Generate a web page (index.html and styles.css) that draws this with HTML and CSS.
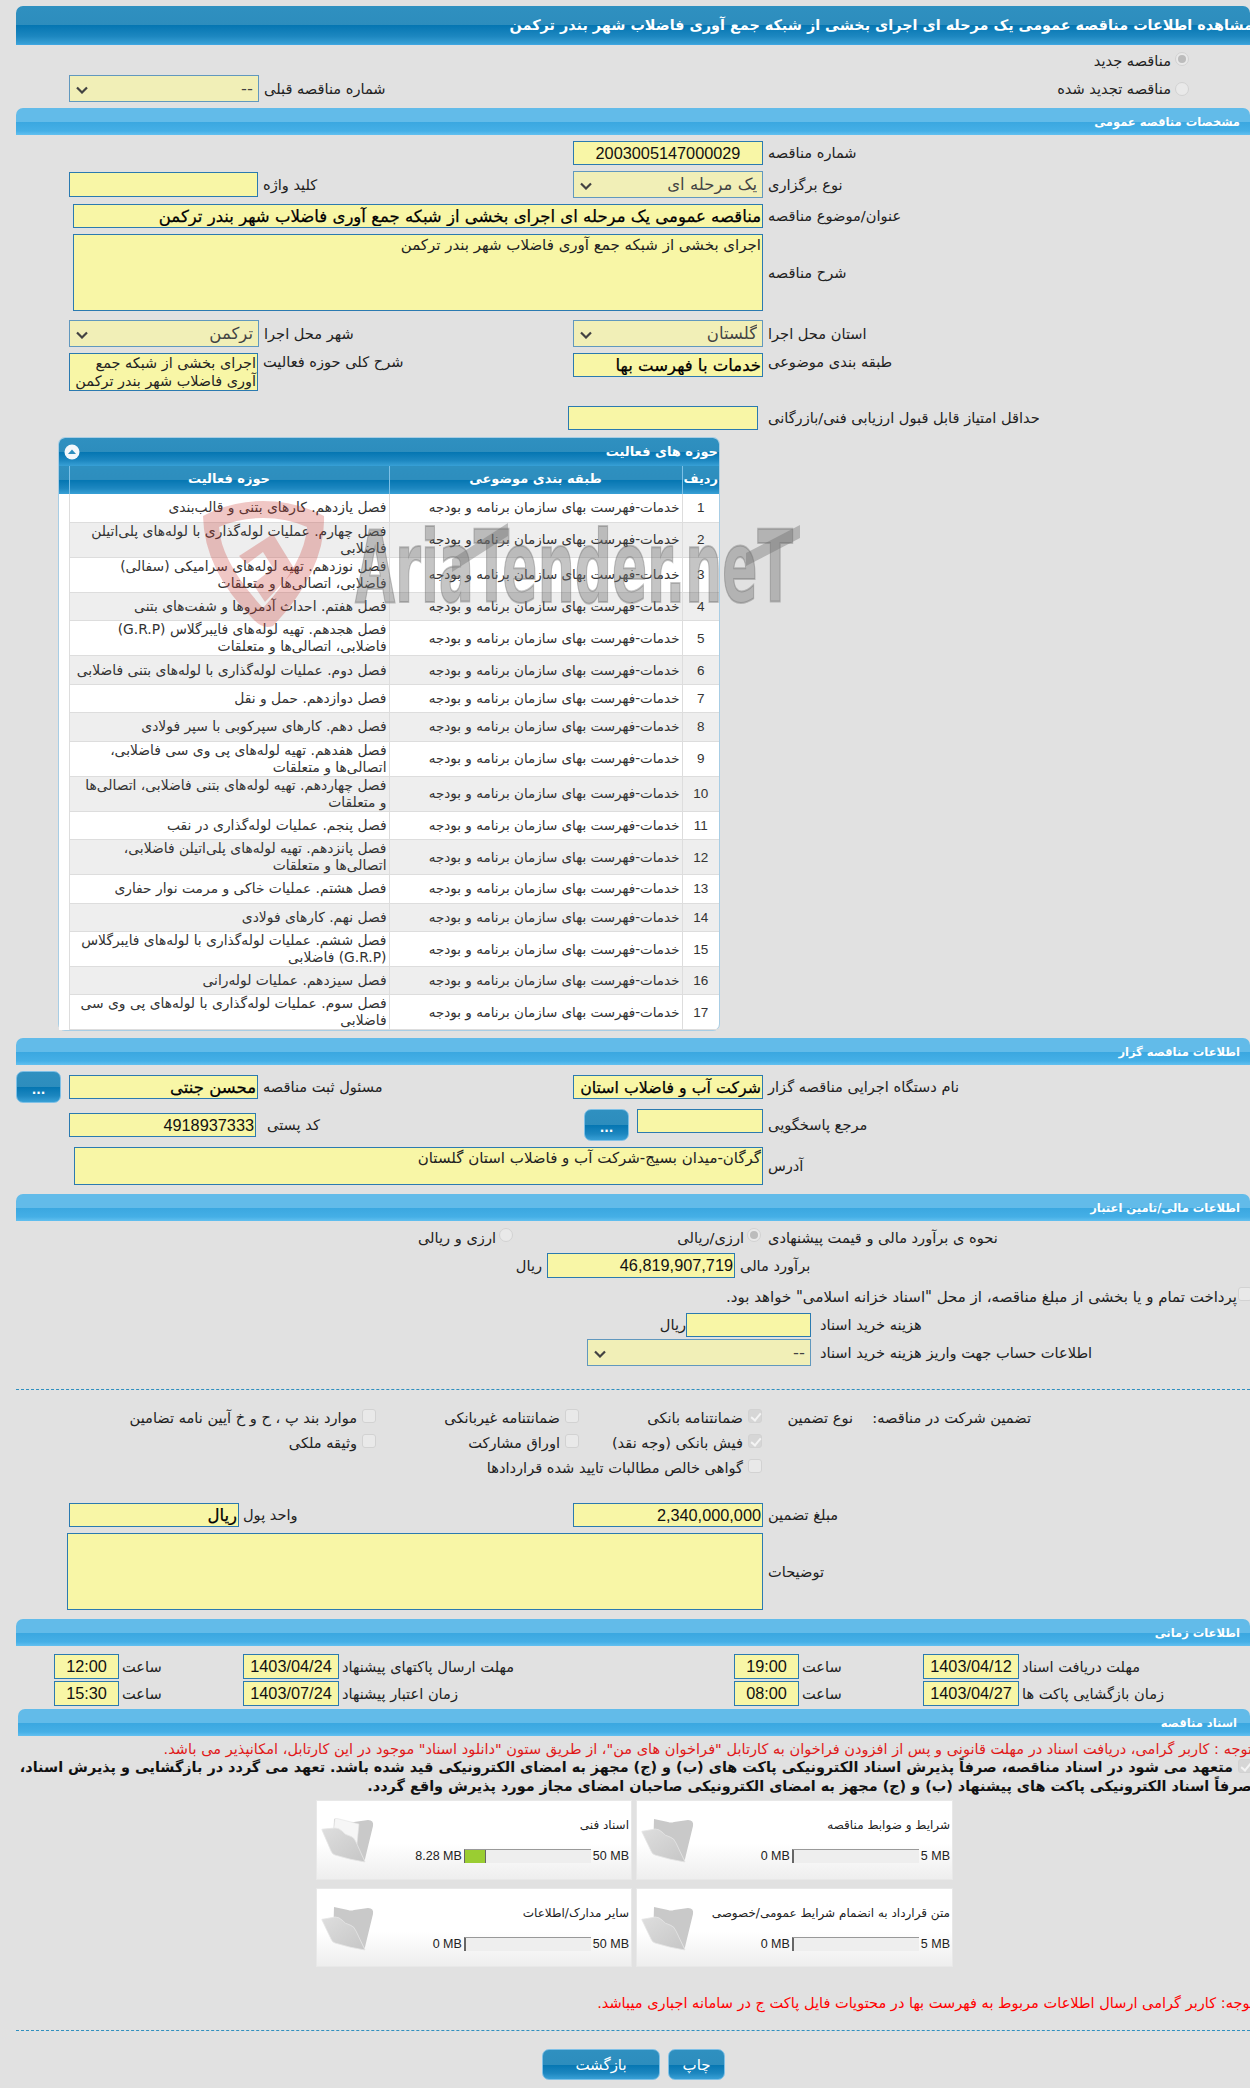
FILE: index.html
```html
<!DOCTYPE html>
<html lang="fa" dir="rtl">
<head>
<meta charset="utf-8">
<title>مشاهده اطلاعات مناقصه</title>
<link rel="stylesheet" href="styles.css">
</head>
<body>
<svg class="defs" width="0" height="0" aria-hidden="true">
  <defs>
    <linearGradient id="fgFront" x1="0" y1="0" x2="1" y2="1"><stop offset="0" stop-color="#dedede"/><stop offset="1" stop-color="#c6c6c6"/></linearGradient>
    <symbol id="folder" viewBox="0 0 53 45">
      <path d="M13 1 L27 4 Q30 5 33 4 L47 2 Q53 2 52 8 L44 41 Q43 44 40 43 L12 35 Z" fill="#c9c9c9"/>
      <path d="M1 14 Q0 13 3 13 L14 11 Q18 11 21 14 Q24 18 29 19 Q33 20 35 25 L44 44 Q30 42 14 37 Q11 36 10 33 Z" fill="url(#fgFront)" stroke="#e6e6e6" stroke-width=".8"/>
    </symbol>
    <symbol id="folderPaper" viewBox="0 0 53 45">
      <path d="M13 1 L27 4 Q30 5 33 4 L47 2 Q53 2 52 8 L44 41 Q43 44 40 43 L12 35 Z" fill="#c9c9c9"/>
      <path d="M14 0 L38 6 L36 26 L12 18 Z" fill="#f6f6f6" stroke="#e2e2e2" stroke-width=".6"/>
      <path d="M1 12 Q0 11 3 11 L14 10 Q18 10 21 13 Q24 17 29 18 Q33 19 35 24 L44 44 Q30 42 14 37 Q11 36 10 33 Z" fill="url(#fgFront)" stroke="#e6e6e6" stroke-width=".8"/>
    </symbol>
  </defs>
</svg>
<main class="page">
  <h1 class="title">مشاهده اطلاعات مناقصه عمومی یک مرحله ای اجرای بخشی از شبکه جمع آوری فاضلاب شهر بندر ترکمن</h1>

  <div class="radio-line mt-7"><input type="radio" class="radio" name="kind" checked disabled><span class="lbl">مناقصه جدید</span></div>
  <div class="row mt-9">
    <div class="col-l"><select class="field sel w-190" disabled><option>--</option></select><span class="lbl">شماره مناقصه قبلی</span></div>
    <div class="radio-line second"><input type="radio" class="radio" name="kind" disabled><span class="lbl">مناقصه تجدید شده</span></div>
  </div>

  <h2 class="bar mt-6">مشخصات مناقصه عمومی</h2>
  <div class="row mt-6">
    <div class="col-l"></div>
    <div class="col-r"><input class="field num center w-190" value="2003005147000029"><span class="lbl">شماره مناقصه</span></div>
  </div>
  <div class="row mt-6">
    <div class="col-l"><input class="field h-25 w-189"><span class="lbl">کلید واژه</span></div>
    <div class="col-r"><select class="field sel w-190" disabled><option>یک مرحله ای</option></select><span class="lbl">نوع برگزاری</span></div>
  </div>
  <div class="row-wide mt-6"><input class="field strong w-690" value="مناقصه عمومی یک مرحله ای اجرای بخشی از شبکه جمع آوری فاضلاب شهر بندر ترکمن"><span class="lbl">عنوان/موضوع مناقصه</span></div>
  <div class="row-wide mt-6"><textarea class="field area w-690 h-77">اجرای بخشی از شبکه جمع آوری فاضلاب شهر بندر ترکمن</textarea><span class="lbl">شرح مناقصه</span></div>
  <div class="row mt-9">
    <div class="col-l"><select class="field sel w-190" disabled><option>ترکمن</option></select><span class="lbl">شهر محل اجرا</span></div>
    <div class="col-r"><select class="field sel w-190" disabled><option>گلستان</option></select><span class="lbl">استان محل اجرا</span></div>
  </div>
  <div class="row mt-6 top">
    <div class="col-l"><textarea class="field area tight w-189 h-38">اجرای بخشی از شبکه جمع آوری فاضلاب شهر بندر ترکمن</textarea><span class="lbl lift">شرح کلی حوزه فعالیت</span></div>
    <div class="col-r"><input class="field strong w-190" value="خدمات با فهرست بها"><span class="lbl lift">طبقه بندی موضوعی</span></div>
  </div>
  <div class="row-min mt-15"><input class="field w-190"><span class="lbl">حداقل امتیاز قابل قبول ارزیابی فنی/بازرگانی</span></div>

  <section class="grid-box mt-7">
    <header class="grid-title">
      <span>حوزه های فعالیت</span>
      <svg class="collapse" viewBox="0 0 16 16" width="16" height="16" aria-hidden="true"><circle cx="8" cy="8" r="7.5" fill="#f4f8fb"/><path d="M4 10 L8 5.5 L12 10 Z" fill="#2f8fbf"/></svg>
    </header>
    <table class="grid">
      <colgroup><col class="c-id"><col class="c-cat"><col class="c-act"><col class="c-pad"></colgroup>
      <thead><tr><th>ردیف</th><th>طبقه بندی موضوعی</th><th>حوزه فعالیت</th><th></th></tr></thead>
      <tbody>
        <tr><td>1</td><td>خدمات-فهرست بهای سازمان برنامه و بودجه</td><td>فصل یازدهم. کارهای بتنی و قالب‌بندی</td><td></td></tr>
        <tr><td>2</td><td>خدمات-فهرست بهای سازمان برنامه و بودجه</td><td>فصل چهارم. عملیات لوله‌گذاری با لوله‌های پلی‌اتیلن<br>فاضلابی</td><td></td></tr>
        <tr><td>3</td><td>خدمات-فهرست بهای سازمان برنامه و بودجه</td><td>فصل نوزدهم. تهیه لوله‌های سرامیکی (سفالی)<br>فاضلابی، اتصالی‌ها و متعلقات</td><td></td></tr>
        <tr><td>4</td><td>خدمات-فهرست بهای سازمان برنامه و بودجه</td><td>فصل هفتم. احداث آدمروها و شفت‌های بتنی</td><td></td></tr>
        <tr><td>5</td><td>خدمات-فهرست بهای سازمان برنامه و بودجه</td><td>فصل هجدهم. تهیه لوله‌های فایبرگلاس (G.R.P)<br>فاضلابی، اتصالی‌ها و متعلقات</td><td></td></tr>
        <tr><td>6</td><td>خدمات-فهرست بهای سازمان برنامه و بودجه</td><td>فصل دوم. عملیات لوله‌گذاری با لوله‌های بتنی فاضلابی</td><td></td></tr>
        <tr><td>7</td><td>خدمات-فهرست بهای سازمان برنامه و بودجه</td><td>فصل دوازدهم. حمل و نقل</td><td></td></tr>
        <tr><td>8</td><td>خدمات-فهرست بهای سازمان برنامه و بودجه</td><td>فصل دهم. کارهای سپرکوبی با سپر فولادی</td><td></td></tr>
        <tr><td>9</td><td>خدمات-فهرست بهای سازمان برنامه و بودجه</td><td>فصل هفدهم. تهیه لوله‌های پی وی سی فاضلابی،<br>اتصالی‌ها و متعلقات</td><td></td></tr>
        <tr><td>10</td><td>خدمات-فهرست بهای سازمان برنامه و بودجه</td><td>فصل چهاردهم. تهیه لوله‌های بتنی فاضلابی، اتصالی‌ها<br>و متعلقات</td><td></td></tr>
        <tr><td>11</td><td>خدمات-فهرست بهای سازمان برنامه و بودجه</td><td>فصل پنجم. عملیات لوله‌گذاری در نقب</td><td></td></tr>
        <tr><td>12</td><td>خدمات-فهرست بهای سازمان برنامه و بودجه</td><td>فصل پانزدهم. تهیه لوله‌های پلی‌اتیلن فاضلابی،<br>اتصالی‌ها و متعلقات</td><td></td></tr>
        <tr><td>13</td><td>خدمات-فهرست بهای سازمان برنامه و بودجه</td><td>فصل هشتم. عملیات خاکی و مرمت نوار حفاری</td><td></td></tr>
        <tr><td>14</td><td>خدمات-فهرست بهای سازمان برنامه و بودجه</td><td>فصل نهم. کارهای فولادی</td><td></td></tr>
        <tr><td>15</td><td>خدمات-فهرست بهای سازمان برنامه و بودجه</td><td>فصل ششم. عملیات لوله‌گذاری با لوله‌های فایبرگلاس<br>(G.R.P) فاضلابی</td><td></td></tr>
        <tr><td>16</td><td>خدمات-فهرست بهای سازمان برنامه و بودجه</td><td>فصل سیزدهم. عملیات لوله‌رانی</td><td></td></tr>
        <tr><td>17</td><td>خدمات-فهرست بهای سازمان برنامه و بودجه</td><td>فصل سوم. عملیات لوله‌گذاری با لوله‌های پی وی سی<br>فاضلابی</td><td></td></tr>
      </tbody>
    </table>
    <div class="watermark" aria-hidden="true">
      <svg class="wm-shield" viewBox="0 0 125 128" width="125" height="128"><path d="M62 1 Q95 1 123 16 Q125 70 72 126 Q62 130 52 119 Q3 70 2 16 Q30 1 62 1 Z M62 18 Q38 18 18 27 Q20 62 62 108 Q104 62 106 27 Q86 18 62 18 Z" fill="#c8362e" fill-rule="evenodd" opacity=".28"/><path d="M38 56 L72 34 L94 70 L64 102 L52 84 L72 68 L62 52 L46 64 Z" fill="#c8362e" opacity=".28"/></svg>
      <span class="wm-text">AriaTender.neT</span>
      <svg class="wm-bars" viewBox="0 0 360 48" width="360" height="48"><path d="M0 36 L56 0 L56 13 L0 49 Z" fill="#6e6e6e" opacity=".4"/><path d="M294 30 L348 2 L348 15 L294 43 Z" fill="#6e6e6e" opacity=".4"/></svg>
    </div>
  </section>

  <h2 class="bar mt-7">اطلاعات مناقصه گزار</h2>
  <div class="row mt-6">
    <div class="col-l flush"><button class="btn dots">...</button><input class="field strong w-189" value="محسن جنتی"><span class="lbl">مسئول ثبت مناقصه</span></div>
    <div class="col-r"><input class="field strong snug w-190" value="شرکت آب و فاضلاب استان"><span class="lbl">نام دستگاه اجرایی مناقصه گزار</span></div>
  </div>
  <div class="row mt-6">
    <div class="col-l"><input class="field num w-187" value="4918937333"><span class="lbl wide-gap">کد پستی</span></div>
    <div class="col-r inset"><button class="btn dots">...</button><input class="field w-127 nudge"><span class="lbl">مرجع پاسخگویی</span></div>
  </div>
  <div class="row-addr mt-6"><textarea class="field area w-689 h-38">گرگان-میدان بسیج-شرکت آب و فاضلاب استان گلستان</textarea><span class="lbl">آدرس</span></div>

  <h2 class="bar mt-9">اطلاعات مالی/تامین اعتبار</h2>
  <div class="row mode-row mt-7">
    <div class="col-l mode-alt"><div class="opt opt-93"><input type="radio" class="radio" name="cur" disabled><span class="lbl">ارزی و ریالی</span></div></div>
    <div class="col-r mode-main"><div class="opt opt-88"><input type="radio" class="radio" name="cur" checked disabled><span class="lbl">ارزی/ریالی</span></div><span class="lbl">نحوه ی برآورد مالی و قیمت پیشنهادی</span></div>
  </div>
  <div class="row-amount mt-7"><span class="lbl">ریال</span><input class="field num w-188 h-25" value="46,819,907,719"><span class="lbl">برآورد مالی</span></div>
  <label class="treasury mt-9"><input type="checkbox" class="check" disabled><span class="lbl">پرداخت تمام و یا بخشی از مبلغ مناقصه، از محل "اسناد خزانه اسلامی" خواهد بود.</span></label>
  <div class="row-cost mt-3"><span class="lbl">ریال</span><input class="field w-125"><span class="lbl">هزینه خرید اسناد</span></div>
  <div class="row-account mt-2"><select class="field sel w-224" disabled><option>--</option></select><span class="lbl">اطلاعات حساب جهت واریز هزینه خرید اسناد</span></div>

  <hr class="dash mt-23">

  <div class="guarantee mt-17">
    <span class="lbl">تضمین شرکت در مناقصه:</span>
    <span class="lbl">نوع تضمین</span>
    <label class="opt"><input type="checkbox" class="check" checked disabled><span class="lbl">ضمانتنامه بانکی</span></label>
    <label class="opt"><input type="checkbox" class="check" disabled><span class="lbl">ضمانتنامه غیربانکی</span></label>
    <label class="opt"><input type="checkbox" class="check" disabled><span class="lbl">موارد بند پ ، ح و خ آیین نامه تضامین</span></label>
    <label class="opt start"><input type="checkbox" class="check" checked disabled><span class="lbl">فیش بانکی (وجه نقد)</span></label>
    <label class="opt"><input type="checkbox" class="check" disabled><span class="lbl">اوراق مشارکت</span></label>
    <label class="opt"><input type="checkbox" class="check" disabled><span class="lbl">وثیقه ملکی</span></label>
    <label class="opt start"><input type="checkbox" class="check" disabled><span class="lbl">گواهی خالص مطالبات تایید شده قراردادها</span></label>
  </div>

  <div class="row mt-21">
    <div class="col-l tight-gap"><input class="field strong w-170" value="ریال"><span class="lbl">واحد پول</span></div>
    <div class="col-r"><input class="field num w-190" value="2,340,000,000"><span class="lbl">مبلغ تضمین</span></div>
  </div>
  <div class="row-notes mt-6"><textarea class="field area w-696 h-77"></textarea><span class="lbl">توضیحات</span></div>

  <h2 class="bar mt-9">اطلاعات زمانی</h2>
  <div class="time-row mt-8">
    <div class="cell"><input class="field num center w-65 h-25" value="12:00"><span class="lbl">ساعت</span></div>
    <div class="cell"><input class="field num center w-96 h-25" value="1403/04/24"><span class="lbl">مهلت ارسال پاکتهای پیشنهاد</span></div>
    <div class="cell"><input class="field num center w-65 h-25" value="19:00"><span class="lbl">ساعت</span></div>
    <div class="cell"><input class="field num center w-96 h-25" value="1403/04/12"><span class="lbl">مهلت دریافت اسناد</span></div>
  </div>
  <div class="time-row mt-2">
    <div class="cell"><input class="field num center w-65 h-25" value="15:30"><span class="lbl">ساعت</span></div>
    <div class="cell"><input class="field num center w-96 h-25" value="1403/07/24"><span class="lbl">زمان اعتبار پیشنهاد</span></div>
    <div class="cell"><input class="field num center w-65 h-25" value="08:00"><span class="lbl">ساعت</span></div>
    <div class="cell"><input class="field num center w-96 h-25" value="1403/04/27"><span class="lbl">زمان بازگشایی پاکت ها</span></div>
  </div>

  <h2 class="bar bar-inset mt-3">اسناد مناقصه</h2>
  <p class="warn note-1">توجه : کاربر گرامی، دریافت اسناد در مهلت قانونی و پس از افزودن فراخوان به کارتابل "فراخوان های من"، از طریق ستون "دانلود اسناد" موجود در این کارتابل، امکانپذیر می باشد.</p>
  <p class="pledge"><input type="checkbox" class="check" checked disabled> متعهد می شود در اسناد مناقصه، صرفاً پذیرش اسناد الکترونیکی پاکت های (ب) و (ج) مجهز به امضای الکترونیکی قید شده باشد. تعهد می گردد در بازگشایی و پذیرش اسناد،<br>صرفاً اسناد الکترونیکی پاکت های پیشنهاد (ب) و (ج) مجهز به امضای الکترونیکی صاحبان امضای مجاز مورد پذیرش واقع گردد.</p>

  <div class="files">
    <article class="card">
      <svg class="folder"><use href="#folder"/></svg>
      <div class="card-body"><div class="card-name">شرایط و ضوابط مناقصه</div>
        <div class="meter"><span>0 MB</span><span class="track"><span class="fill"></span></span><span>5 MB</span></div></div>
    </article>
    <article class="card">
      <svg class="folder"><use href="#folderPaper"/></svg>
      <div class="card-body"><div class="card-name">اسناد فنی</div>
        <div class="meter"><span>8.28 MB</span><span class="track"><span class="fill" style="width:21px"></span></span><span>50 MB</span></div></div>
    </article>
    <article class="card">
      <svg class="folder"><use href="#folder"/></svg>
      <div class="card-body"><div class="card-name">متن قرارداد به انضمام شرایط عمومی/خصوصی</div>
        <div class="meter"><span>0 MB</span><span class="track"><span class="fill"></span></span><span>5 MB</span></div></div>
    </article>
    <article class="card">
      <svg class="folder"><use href="#folder"/></svg>
      <div class="card-body"><div class="card-name">سایر مدارک/اطلاعات</div>
        <div class="meter"><span>0 MB</span><span class="track"><span class="fill"></span></span><span>50 MB</span></div></div>
    </article>
  </div>

  <p class="warn note-2">توجه: کاربر گرامی ارسال اطلاعات مربوط به فهرست بها در محتویات فایل پاکت ج در سامانه اجباری میباشد.</p>
  <hr class="dash mt-20">
  <div class="actions">
    <button class="btn act-print">چاپ</button>
    <button class="btn act-back">بازگشت</button>
  </div>
</main>
</body>
</html>
```
FILE: styles.css
```css
* { box-sizing: border-box; }
html, body { margin: 0; padding: 0; height: 2088px; overflow: hidden; }
body { background: #e1e1e1; color: #222; font: 14.6px/18px "DejaVu Sans", sans-serif; }
.defs { position: absolute; }
.page { margin-left: 16px; width: 1234px; }

.mt-2 { margin-top: 2px; } .mt-3 { margin-top: 3px; } .mt-6 { margin-top: 6px; } .mt-7 { margin-top: 7px; }
.mt-8 { margin-top: 8px; } .mt-9 { margin-top: 9px; } .mt-15 { margin-top: 15px; } .mt-17 { margin-top: 17px; }
.mt-20 { margin-top: 20px; } .mt-21 { margin-top: 21px; } .mt-23 { margin-top: 23px; }

.title, .btn, .grid-title, .grid th {
  background: linear-gradient(#2f90c0 0, #2d8dbd 50%, #0576b2 51%, #1d87c0 80%, #38a0d6 100%);
  color: #fff;
}
.title {
  margin: 6px 0 0; height: 39px; border-radius: 7px 7px 0 0; padding: 0; text-indent: -3px;
  font: bold 14.4px/39px "DejaVu Sans", sans-serif; white-space: nowrap; overflow: hidden;
  border-bottom: 1px solid #3ea5e0;
}
.bar {
  margin-bottom: 0; height: 27px; border-radius: 7px 7px 0 0; padding: 0 10px 0 0; color: #fff;
  background: linear-gradient(#62bbe9 0, #62bbe9 50%, #3aa7e0 51%, #45afe6 85%, #62c0f0 100%);
  font: bold 11.5px/29px "DejaVu Sans", sans-serif;
}
.bar-inset { margin-left: 2px; padding-right: 13px; }

.row, .row-wide, .row-min, .row-addr, .row-amount, .row-cost, .row-account, .row-notes, .time-row { direction: ltr; }
.row { display: grid; grid-template-columns: 557px 1fr; align-items: center; }
.row.top { align-items: start; }
.col-l, .col-r { display: flex; align-items: center; gap: 5px; }
.row.top .col-l, .row.top .col-r { align-items: flex-start; }
.col-l { padding-left: 53px; }
.col-l.flush { padding-left: 0; }
.col-l.flush .btn { margin-right: 3px; }
.col-l.tight-gap { gap: 4px; }
.col-r.inset { padding-left: 11px; }
.col-r.inset .btn { margin-right: 3px; }
.nudge { align-self: flex-start; margin-top: 1px; }
.row-wide { display: flex; align-items: center; gap: 5px; padding-left: 57px; }
.row-addr { display: flex; align-items: center; gap: 5px; padding-left: 58px; }
.row-notes { display: flex; align-items: center; gap: 5px; padding-left: 51px; }
.row-min { display: flex; align-items: center; gap: 10px; padding-left: 552px; }
.row-amount { display: flex; align-items: center; gap: 5px; padding-left: 503px; }
.row-amount .lbl:first-child { width: 23px; }
.row-cost { display: flex; align-items: center; padding-left: 646px; }
.row-cost .lbl:first-child { width: 24px; }
.row-cost .lbl:last-child { margin-left: 9px; }
.row-account { display: flex; align-items: center; gap: 9px; padding-left: 571px; }
.time-row { display: grid; grid-template-columns: 189px 491px 189px 1fr; padding-left: 38px; }
.cell { display: flex; align-items: center; gap: 3px; }

.lbl { direction: rtl; white-space: nowrap; }
.wide-gap { margin-left: 6px; }

.field {
  display: block; direction: rtl; height: 24px; margin: 0; padding: 0 1px;
  border: 1px solid #2b7ab0; border-radius: 0; background: #f8f6a6; color: #111;
  font: 16.3px/20px "Liberation Sans", "DejaVu Sans", sans-serif; outline: none;
}
.center { text-align: center; }
.sel {
  appearance: none; -webkit-appearance: none; height: 27px; padding-right: 5px; color: #000;
  font: 16.5px "DejaVu Sans", sans-serif;
  background: #f8f6a6 url("data:image/svg+xml,%3Csvg xmlns='http://www.w3.org/2000/svg' width='12' height='8'%3E%3Cpath d='M1 1.5 L6 6.5 L11 1.5' fill='none' stroke='%23000' stroke-width='2.2'/%3E%3C/svg%3E") no-repeat 6px 10px;
}
.strong { font: 16.5px/20px "DejaVu Sans", sans-serif; color: #000; -webkit-text-stroke: .25px #000; }
.snug { font-size: 15.8px; }
.area { resize: none; overflow: hidden; color: #222; font: 15px/19px "DejaVu Sans", sans-serif; padding: 1px; }
.tight { font-size: 14.4px; line-height: 18px; padding: 0 1px; }
.h-25 { height: 25px; } .h-38 { height: 38px; } .h-77 { height: 77px; }
.w-65 { width: 65px; } .w-96 { width: 96px; } .w-125 { width: 125px; } .w-127 { width: 126px; } .w-170 { width: 170px; }
.w-187 { width: 187px; } .w-188 { width: 188px; } .w-189 { width: 189px; } .w-190 { width: 190px; } .w-224 { width: 224px; }
.w-689 { width: 689px; } .w-690 { width: 690px; } .w-696 { width: 696px; }

.radio, .check {
  appearance: none; -webkit-appearance: none; flex: none; display: block; margin: 0; width: 14px; height: 14px;
  border: 1px solid #d2d2d2; background: #e9e9e9; position: relative;
}
.radio { border-radius: 50%; }
.radio:checked::after { content: ""; position: absolute; inset: 2px; border-radius: 50%; background: #bcbcbc; }
.check { border-radius: 3px; }
.check:checked { background: #d6d6d6; }
.check:checked::after {
  content: ""; position: absolute; left: 4px; top: 1px; width: 4px; height: 8px;
  border: solid #f4f4f4; border-width: 0 2px 2px 0; transform: rotate(40deg);
}
.radio-line { display: flex; direction: rtl; align-items: center; gap: 4px; padding-right: 61px; height: 14px; }
.radio-line .lbl { position: relative; top: 2px; }
.radio-line.second .lbl { top: 0; }
.opt { display: flex; direction: rtl; align-items: center; gap: 3px; }
.opt .lbl { position: relative; top: 2px; }
.mode-row { height: 18px; }
.mode-row .radio { margin-top: -4px; }
.mode-row .lbl { top: 1px; }
.mode-alt { padding-left: 404px; }
.opt-93 { width: 93px; }
.opt-88 { width: 84px; }
.mode-main { padding-left: 104px; gap: 7px; }
.mode-main > .lbl { position: relative; top: 1px; }
.treasury { display: flex; align-items: flex-start; gap: 1px; margin-right: -2px; font-size: 15px; }
.treasury .lbl { margin-top: 1px; }
.treasury.mt-9 { margin-top: 9px; height: 23px; }

.dash { height: 0; margin-bottom: 0; margin-left: 0; margin-right: 0; border: 0; border-top: 1px dashed #2f8fbf; }

.guarantee {
  display: grid; grid-auto-rows: 25px; grid-template-columns: 178px 91px 183px 203px 200px;
  padding-right: 219px; align-items: start;
}
.guarantee > .lbl { padding-top: 2px; }
.guarantee .opt { gap: 5px; }
.guarantee .start { grid-column: 3; }

.grid-box { position: relative; width: 662px; margin-left: 42px; margin-right: auto; border: 1px solid #a8cde4; border-radius: 7px; background: #fff; }
.grid-title { display: flex; justify-content: space-between; align-items: center; height: 28px; padding: 0 1px 0 5px; font: bold 13px/28px "DejaVu Sans", sans-serif; border-radius: 6px 6px 0 0; }
.collapse { display: block; }
.grid { table-layout: fixed; width: 100%; border-collapse: collapse; font-size: 13.5px; }
.c-id { width: 37px; } .c-cat { width: 293px; } .c-act { width: 320px; } .c-pad { width: 10px; }
.grid th { height: 28px; padding: 0 0 3px; font: bold 13px/16px "DejaVu Sans", sans-serif; border-inline-start: 1px solid #7cc0e6; text-align: center; }
.grid th:first-child { border-inline-start: 0; }
.grid td { height: 28.45px; padding: 0 2px; line-height: 17px; text-align: right; white-space: nowrap; color: #333; border-bottom: 1px solid #ddd; border-inline-start: 1px solid #ddd; }
.grid td:nth-child(3) { font-size: 13.85px; }
.grid td:first-child { text-align: center; border-inline-start: 0; font-family: "Liberation Sans", sans-serif; font-size: 13.5px; }
.grid tbody tr:nth-child(even) td { background: #eee; }
.grid tbody tr td:last-child { background: #fff; border-bottom: 0; }

.watermark { position: absolute; left: 142px; top: 62px; width: 600px; height: 128px; direction: ltr; pointer-events: none; }
.wm-shield { position: absolute; left: 0; top: 0; }
.wm-text {
  position: absolute; left: 154px; top: 5px; white-space: nowrap; transform-origin: 0 50%; transform: scaleX(.52);
  font: bold 100px/126px "DejaVu Sans", sans-serif; color: rgba(110,110,110,.4); -webkit-text-stroke: 2px rgba(110,110,110,.4);
}
.wm-bars { position: absolute; left: 251px; top: 23px; overflow: visible; }

.btn {
  display: block; border: 1px solid #7fc0e6; border-radius: 7px; padding: 0; cursor: pointer;
  font: 15px/30px "DejaVu Sans", sans-serif;
}
.dots { flex: none; width: 45px; height: 32px; font-size: 12px; font-weight: bold; line-height: 36px; }

.warn { margin: 0; color: #e01818; font-size: 14.55px; white-space: nowrap; }
.note-1 { margin-top: 4px; height: 16px; margin-right: -2px; }
.pledge { margin: 2px -2px 0 0; height: 38px; font: bold 14.4px/19px "DejaVu Sans", sans-serif; color: #111; white-space: nowrap; }
.pledge .check { display: inline-block; vertical-align: -1px; }

.files { display: grid; grid-template-columns: 317px 316px; grid-template-rows: 80px 79px; column-gap: 4px; row-gap: 8px; width: 637px; margin: 4px 0 0 0; margin-inline-start: 297px; }
.card { display: flex; direction: ltr; background: linear-gradient(#fff 0, #fff 55%, #eee 100%); border: 1px solid #e8e8e8; }
.folder { flex: none; width: 53px; height: 45px; margin: 17px 0 0 4px; }
.card-body { flex: 1; min-width: 0; padding-right: 2px; }
.card-name { direction: rtl; padding: 15px 0 0; height: 39px; font-size: 12px; color: #222; white-space: nowrap; }
.meter { display: flex; justify-content: flex-end; align-items: center; gap: 2px; font: 12.5px/16px "Liberation Sans", sans-serif; color: #222; margin-top: 8px; direction: ltr; }
.track { display: block; width: 127px; height: 14px; background: #eee; border-top: 1px solid #999; border-left: 1px solid #666; }
.fill { display: block; width: 1px; height: 13px; background: #9acd32; border-right: 1px solid #666; }

.note-2 { margin-top: 27px; margin-right: -4px; height: 16px; color: #f00; }
.actions { display: flex; gap: 8px; padding-right: 525px; margin-top: 18px; }
.act-print { width: 57px; height: 31px; }
.act-back { width: 118px; height: 31px; }
```
